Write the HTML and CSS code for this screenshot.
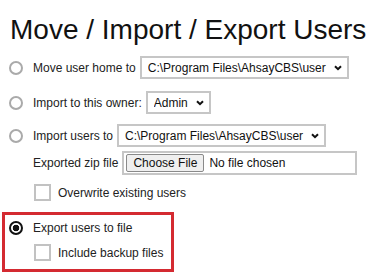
FILE: index.html
```html
<!DOCTYPE html>
<html lang="en">
<head>
  <meta charset="UTF-8" />
  <meta name="viewport" content="width=device-width, initial-scale=1.0"/>
  <title>Move / Import / Export Users</title>
  <link rel="stylesheet" href="styles.css">
</head>
<body>
  <h1 class="title">Move / Import / Export Users</h1>

  <form class="user-form">
    <div class="option option-move">
      <input type="radio" name="action" class="radio" id="moveHome" />
      <label class="label" for="moveHome">Move user home to</label>
      <span class="select-wrap">
        <select class="select">
          <option>C:\Program Files\AhsayCBS\user</option>
        </select>
        <svg class="chevron" width="8" height="6" viewBox="0 0 8 6"><path d="M1 1.2l3 3 3-3" fill="none" stroke="#111" stroke-width="2"/></svg>
      </span>
    </div>

    <div class="option option-owner">
      <input type="radio" name="action" class="radio" id="importOwner" />
      <label class="label" for="importOwner">Import to this owner:</label>
      <span class="select-wrap">
        <select class="select">
          <option>Admin</option>
        </select>
        <svg class="chevron" width="8" height="6" viewBox="0 0 8 6"><path d="M1 1.2l3 3 3-3" fill="none" stroke="#111" stroke-width="2"/></svg>
      </span>
    </div>

    <div class="option option-import">
      <input type="radio" name="action" class="radio" id="importUsers" />
      <label class="label" for="importUsers">Import users to</label>
      <span class="select-wrap">
        <select class="select">
          <option>C:\Program Files\AhsayCBS\user</option>
        </select>
        <svg class="chevron" width="8" height="6" viewBox="0 0 8 6"><path d="M1 1.2l3 3 3-3" fill="none" stroke="#111" stroke-width="2"/></svg>
      </span>
    </div>

    <div class="sub-row file-row">
      <label class="label" for="zipFile">Exported zip file</label>
      <input type="file" class="file" id="zipFile" />
    </div>

    <div class="sub-row check-row overwrite-row">
      <input type="checkbox" class="check" id="overwrite" />
      <label class="label" for="overwrite">Overwrite existing users</label>
    </div>

    <div class="highlight">
      <div class="option">
        <input type="radio" name="action" class="radio" id="exportUsers" checked />
        <label class="label" for="exportUsers">Export users to file</label>
      </div>
      <div class="sub-row check-row backup-row">
        <input type="checkbox" class="check" id="includeBackup" />
        <label class="label" for="includeBackup">Include backup files</label>
      </div>
    </div>
  </form>
</body>
</html>
```

FILE: styles.css
```css
body {
  font-family: 'Liberation Sans', Arial, sans-serif;
  background-color: #ffffff;
  color: #222;
  margin: 0;
}

.title {
  font-size: 28px;
  line-height: 32px;
  font-weight: normal;
  color: #111;
  margin: 14px 0 0 10px;
  white-space: nowrap;
}

.user-form {
  font-size: 12px;
}

.option {
  display: flex;
  align-items: center;
  padding-left: 9px;
  min-height: 14px;
}

.option-move {
  margin-top: 10px;
}

.option-owner {
  margin-top: 12px;
}

.option-import {
  margin-top: 10px;
}

.label {
  line-height: 14px;
  white-space: nowrap;
}

.radio {
  appearance: none;
  width: 14px;
  height: 14px;
  margin: 0 10px 0 0;
  border: 2px solid #aaa;
  border-radius: 50%;
  background: #fff;
  box-sizing: border-box;
  flex-shrink: 0;
}

.radio:checked {
  border-color: #111;
  background: radial-gradient(circle, #111 0 3px, #fff 3.6px);
}

.select-wrap {
  position: relative;
  display: inline-flex;
  margin-left: 4px;
}

.select {
  appearance: none;
  height: 23px;
  padding: 0 20px 0 6px;
  border: 2px solid #c6c6c6;
  border-radius: 0;
  background: #fff;
  font-family: 'Liberation Sans', Arial, sans-serif;
  font-size: 12px;
  color: #111;
  outline: none;
}

.chevron {
  position: absolute;
  right: 7px;
  top: 9px;
  pointer-events: none;
}

.sub-row {
  display: flex;
  align-items: center;
  padding-left: 33px;
}

.file-row {
  margin-top: 4px;
}

.file {
  width: 235px;
  height: 24px;
  box-sizing: border-box;
  margin-left: 4px;
  padding: 1px 2px;
  border: 2px solid #c6c6c6;
  font-family: 'Liberation Sans', Arial, sans-serif;
  font-size: 12px;
  color: #111;
}

.file::file-selector-button {
  height: 18px;
  padding: 0 6px;
  margin-right: 5px;
  background-color: #efefef;
  border: 1px solid #8a8a8a;
  border-radius: 2px;
  font-family: inherit;
  font-size: 12px;
  color: #111;
}

.check-row {
  padding-left: 34px;
}

.overwrite-row {
  margin-top: 9px;
}

.check {
  appearance: none;
  width: 17px;
  height: 17px;
  margin: 0 7px 0 0;
  border: 2px solid #c2c2c2;
  background: #fff;
  box-sizing: border-box;
  flex-shrink: 0;
}

.highlight {
  width: 172px;
  box-sizing: border-box;
  margin: 11px 0 0 2px;
  padding: 6px 0 8px 4px;
  border: 3px solid #d42a31;
}

.highlight .option {
  padding-left: 0;
}

.highlight .check-row {
  padding-left: 25px;
  margin-top: 9px;
}
```
